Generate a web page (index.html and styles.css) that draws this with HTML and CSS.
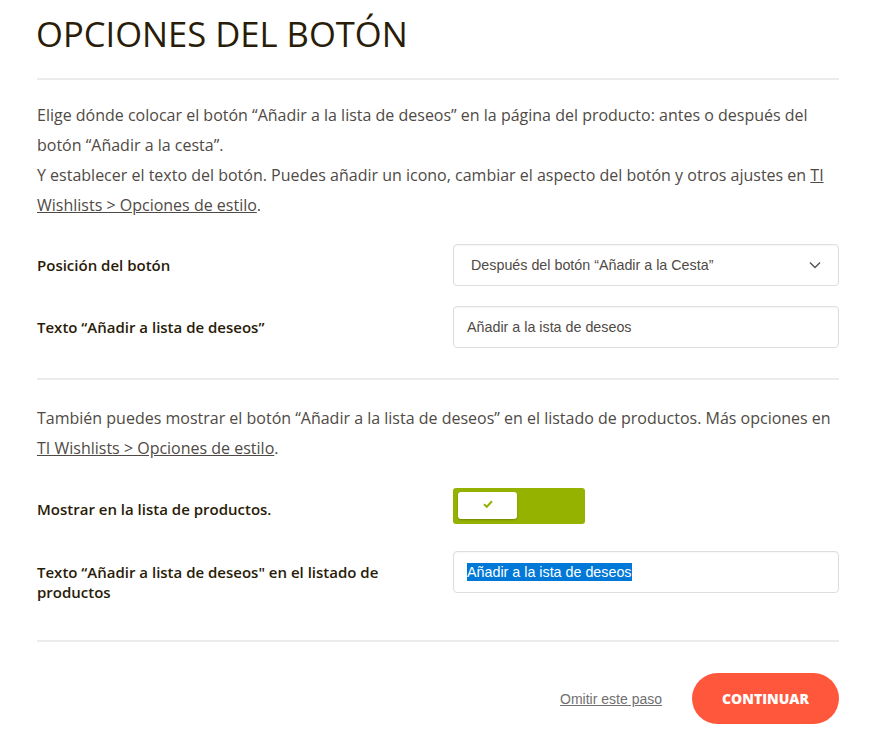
FILE: index.html
```html
<!DOCTYPE html>
<html lang="es">
<head>
	<meta charset="UTF-8">
	<title>Opciones del botón</title>
<link rel="stylesheet" href="styles.css">
</head>
<body>
	<div id="wizard">
		<h2 class="title">OPCIONES DEL BOTÓN</h2>
		<hr class="sep">
		<p class="desc">Elige dónde colocar el botón “Añadir a la lista de deseos” en la página del producto: antes o después del botón “Añadir a la cesta”.<br>Y establecer el texto del botón. Puedes añadir un icono, cambiar el aspecto del botón y otros ajustes en <a href="javascript:;">TI Wishlists &gt; Opciones de estilo</a>.</p>
		<div class="form">
			<div class="row">
				<label class="label">Posición del botón</label>
				<div class="field select">
					<span>Después del botón “Añadir a la Cesta”</span>
					<svg width="12" height="8" viewBox="0 0 12 8"><path d="M1 1.5 L6 6.5 L11 1.5" fill="none" stroke="#555" stroke-width="1.4"/></svg>
				</div>
			</div>
			<div class="row">
				<label class="label">Texto “Añadir a lista de deseos”</label>
				<div class="field input"><span>Añadir a la ista de deseos</span></div>
			</div>
		</div>
		<hr class="sep mid">
		<p class="desc desc-list">También puedes mostrar el botón “Añadir a la lista de deseos” en el listado de productos. Más opciones en <a href="javascript:;">TI Wishlists &gt; Opciones de estilo</a>.</p>
		<div class="form form-list">
			<div class="row">
				<label class="label">Mostrar en la lista de productos.</label>
				<div class="toggle">
					<span class="knob">
						<svg width="10" height="8" viewBox="0 0 10 8"><path d="M1 4.2 L3.8 6.8 L9 1.2" fill="none" stroke="#96b200" stroke-width="2"/></svg>
					</span>
				</div>
			</div>
			<div class="row">
				<label class="label">Texto “Añadir a lista de deseos" en el listado de productos</label>
				<div class="field input"><span class="selected">Añadir a la ista de deseos</span></div>
			</div>
		</div>
		<hr class="sep end">
		<div class="actions">
			<a href="javascript:;" class="skip">Omitir este paso</a>
			<a href="javascript:;" class="btn">CONTINUAR</a>
		</div>
	</div>
</body>
</html>
```

FILE: styles.css
```css
* {
	margin: 0;
	padding: 0;
	box-sizing: border-box;
}
body {
	background: #fff;
	font-family: "Open Sans", sans-serif;
	color: #4f4a45;
}
#wizard {
	width: 802px;
	margin-left: 37px;
	padding-top: 12px;
}
.title {
	font-size: 34.6px;
	font-weight: 400;
	line-height: 43px;
	color: #291c09;
	margin-left: -1px;
}
.sep {
	border: 0;
	height: 2px;
	background: #ebebeb;
	margin-top: 23px;
}
.sep.mid {
	margin-top: 30px;
}
.sep.end {
	margin-top: 38px;
}
.desc {
	font-size: 16px;
	line-height: 30px;
	margin-top: 20px;
	margin-bottom: 24px;
}
.desc-list {
	margin-top: 23px;
	margin-bottom: 25px;
}
.desc a {
	color: #4f4a45;
	text-decoration: underline;
}
.form {
	display: flex;
	flex-direction: column;
	gap: 20px;
}
.form-list {
	gap: 27px;
}
.row {
	display: grid;
	grid-template-columns: 416px 386px;
	align-items: start;
}
.label {
	font-size: 15px;
	font-weight: 600;
	line-height: 20px;
	color: #291c09;
	padding-top: 11px;
	padding-right: 30px;
}
.field {
	height: 42px;
	border: 1px solid #dedede;
	border-radius: 4px;
	box-shadow: inset 0 1px 2px rgba(0,0,0,0.04);
	font-family: "Liberation Sans", Arial, sans-serif;
	font-size: 14.3px;
	color: #4f4a45;
	display: flex;
	align-items: center;
}
.select {
	justify-content: space-between;
	padding: 0 17px 0 17px;
}
.input {
	padding: 0 13px;
}
.selected {
	background: #0078d7;
	color: #fff;
	line-height: 18px;
}
.toggle {
	width: 132px;
	height: 36px;
	background: #96b200;
	border-radius: 3px;
	padding: 4px 5px;
}
.knob {
	width: 59px;
	height: 27px;
	background: #fff;
	border-radius: 3px;
	box-shadow: 0 1px 2px rgba(0,0,0,0.25);
	display: flex;
	align-items: center;
	justify-content: center;
	padding-bottom: 4px;
}
.actions {
	display: flex;
	justify-content: flex-end;
	align-items: center;
	gap: 30px;
	margin-top: 31px;
}
.skip {
	font-family: "Liberation Sans", Arial, sans-serif;
	font-size: 14px;
	color: #707070;
	text-decoration: underline;
}
.btn {
	width: 147px;
	height: 51px;
	border-radius: 26px;
	background: #ff573b;
	color: #fff;
	font-size: 14px;
	font-weight: 800;
	text-decoration: none;
	display: flex;
	align-items: center;
	justify-content: center;
}
```
